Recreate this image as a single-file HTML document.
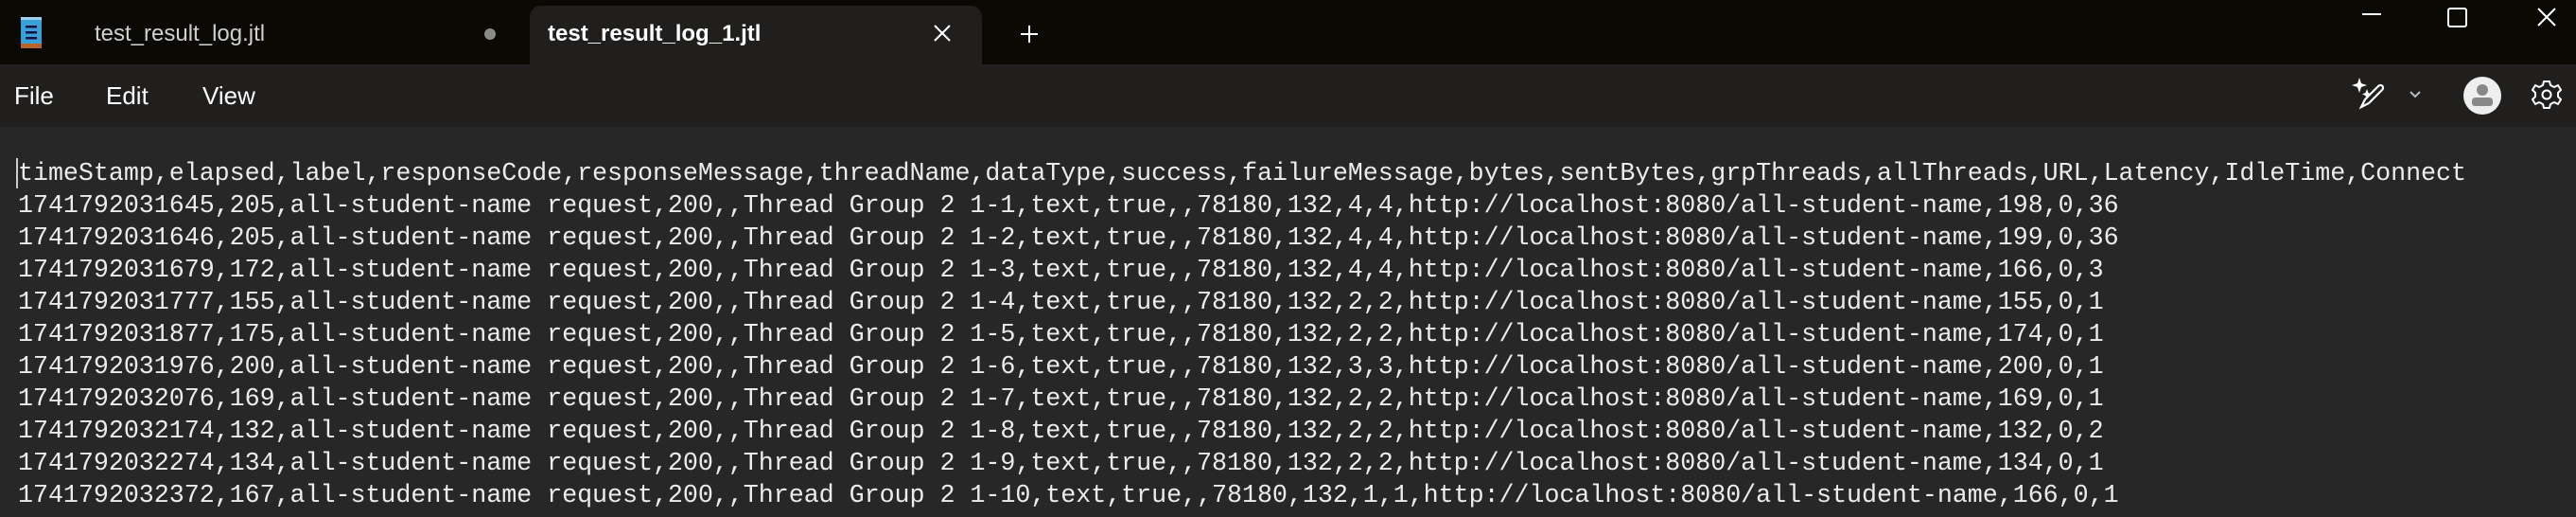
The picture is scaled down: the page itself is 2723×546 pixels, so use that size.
<!DOCTYPE html>
<html><head><meta charset="utf-8"><style>
*{margin:0;padding:0;box-sizing:border-box}
body{width:2723px;height:546px;overflow:hidden;background:#272727;position:relative;font-family:"Liberation Sans",sans-serif}
#title{position:absolute;left:0;top:0;width:2723px;height:68px;background:#0b0904}
#menu{position:absolute;left:0;top:68px;width:2723px;height:66px;background:#201f1d}
.tab{position:absolute;left:560px;top:6px;width:478px;height:62px;background:#201f1d;border-radius:12px 12px 0 0}
.t{position:absolute;color:#fff;white-space:nowrap}
#ed{position:absolute;left:19px;top:167px;font-family:"Liberation Mono",monospace;font-size:26.7px;letter-spacing:-0.04px;line-height:34px;color:#ececec;white-space:pre}
.cur{position:absolute;left:17px;top:167px;width:2px;height:32px;background:#ccc}
</style></head><body>
<div id="title"></div>
<div class="tab"></div>
<svg style="position:absolute;left:20px;top:18px" width="28" height="34" viewBox="0 0 28 34">
<rect x="2" y="2" width="22" height="28" fill="#3aa0d8"/>
<rect x="2" y="28" width="22" height="5" fill="#b5652a"/>
<rect x="2" y="0" width="22" height="3" fill="#9fd0ef"/>
<rect x="7" y="9" width="12" height="2.5" fill="#114"/>
<rect x="7" y="15" width="12" height="2.5" fill="#114"/>
<rect x="7" y="21" width="12" height="2.5" fill="#114"/>
</svg>
<div class="t" style="left:100px;top:22px;font-size:24px;color:#d0d0d0">test_result_log.jtl</div>
<div style="position:absolute;left:512px;top:30px;width:12px;height:12px;border-radius:50%;background:#8a8a8a"></div>
<div class="t" style="left:579px;top:22px;font-size:24px;font-weight:bold">test_result_log_1.jtl</div>
<svg style="position:absolute;left:986px;top:25px" width="20" height="20"><path d="M2 2L18 18M18 2L2 18" stroke="#fff" stroke-width="2"/></svg>
<svg style="position:absolute;left:1078px;top:26px" width="20" height="20"><path d="M10 1V19M1 10H19" stroke="#fff" stroke-width="2"/></svg>
<svg style="position:absolute;left:2495px;top:8px" width="220" height="24">
<path d="M2 7H22" stroke="#fff" stroke-width="2"/>
<rect x="93" y="-2" width="19" height="19" rx="2" fill="none" stroke="#fff" stroke-width="2" transform="translate(0,3)"/>
<path d="M188 1L206 19M206 1L188 19" stroke="#fff" stroke-width="2"/>
</svg>
<div id="menu"></div>
<div class="t" style="left:15px;top:86px;font-size:26px">File</div>
<div class="t" style="left:112px;top:86px;font-size:26px">Edit</div>
<div class="t" style="left:214px;top:86px;font-size:26px">View</div>
<svg style="position:absolute;left:2486px;top:80px" width="80" height="36" viewBox="0 0 80 36">
<path d="M8 2L10 8L16 10L10 12L8 18L6 12L0 10L6 8Z" fill="#fff"/>
<path d="M16 14L17.5 18L21 19.5L17.5 21L16 25L14.5 21L11 19.5L14.5 18Z" fill="#fff"/>
<path d="M10 33L14 25L28 11C31 8 35 12 32 15L18 29Z" fill="none" stroke="#fff" stroke-width="2.2"/>
<path d="M62 17L67 22L72 17" fill="none" stroke="#bbb" stroke-width="2"/>
</svg>
<svg style="position:absolute;left:2603px;top:80px" width="42" height="42" viewBox="0 0 42 42">
<circle cx="21" cy="21" r="20" fill="#eee"/>
<circle cx="21" cy="15" r="6" fill="#888"/>
<path d="M10 27Q10 23 14 23H28Q32 23 32 27V29Q32 32 28 32H14Q10 32 10 29Z" fill="#888"/>
</svg>
<svg style="position:absolute;left:2676px;top:84px" width="32" height="32" viewBox="0 0 32 32">
<path d="M13 2H19L20 6L24 8L28 6L31 11L28 14V18L31 21L28 26L24 24L20 26L19 30H13L12 26L8 24L4 26L1 21L4 18V14L1 11L4 6L8 8L12 6Z" fill="none" stroke="#fff" stroke-width="2" stroke-linejoin="round"/>
<circle cx="16" cy="16" r="4.5" fill="none" stroke="#fff" stroke-width="2"/>
</svg>
<div class="cur"></div>
<div id="ed">timeStamp,elapsed,label,responseCode,responseMessage,threadName,dataType,success,failureMessage,bytes,sentBytes,grpThreads,allThreads,URL,Latency,IdleTime,Connect
1741792031645,205,all-student-name request,200,,Thread Group 2 1-1,text,true,,78180,132,4,4,http://localhost:8080/all-student-name,198,0,36
1741792031646,205,all-student-name request,200,,Thread Group 2 1-2,text,true,,78180,132,4,4,http://localhost:8080/all-student-name,199,0,36
1741792031679,172,all-student-name request,200,,Thread Group 2 1-3,text,true,,78180,132,4,4,http://localhost:8080/all-student-name,166,0,3
1741792031777,155,all-student-name request,200,,Thread Group 2 1-4,text,true,,78180,132,2,2,http://localhost:8080/all-student-name,155,0,1
1741792031877,175,all-student-name request,200,,Thread Group 2 1-5,text,true,,78180,132,2,2,http://localhost:8080/all-student-name,174,0,1
1741792031976,200,all-student-name request,200,,Thread Group 2 1-6,text,true,,78180,132,3,3,http://localhost:8080/all-student-name,200,0,1
1741792032076,169,all-student-name request,200,,Thread Group 2 1-7,text,true,,78180,132,2,2,http://localhost:8080/all-student-name,169,0,1
1741792032174,132,all-student-name request,200,,Thread Group 2 1-8,text,true,,78180,132,2,2,http://localhost:8080/all-student-name,132,0,2
1741792032274,134,all-student-name request,200,,Thread Group 2 1-9,text,true,,78180,132,2,2,http://localhost:8080/all-student-name,134,0,1
1741792032372,167,all-student-name request,200,,Thread Group 2 1-10,text,true,,78180,132,1,1,http://localhost:8080/all-student-name,166,0,1</div>
</body></html>
